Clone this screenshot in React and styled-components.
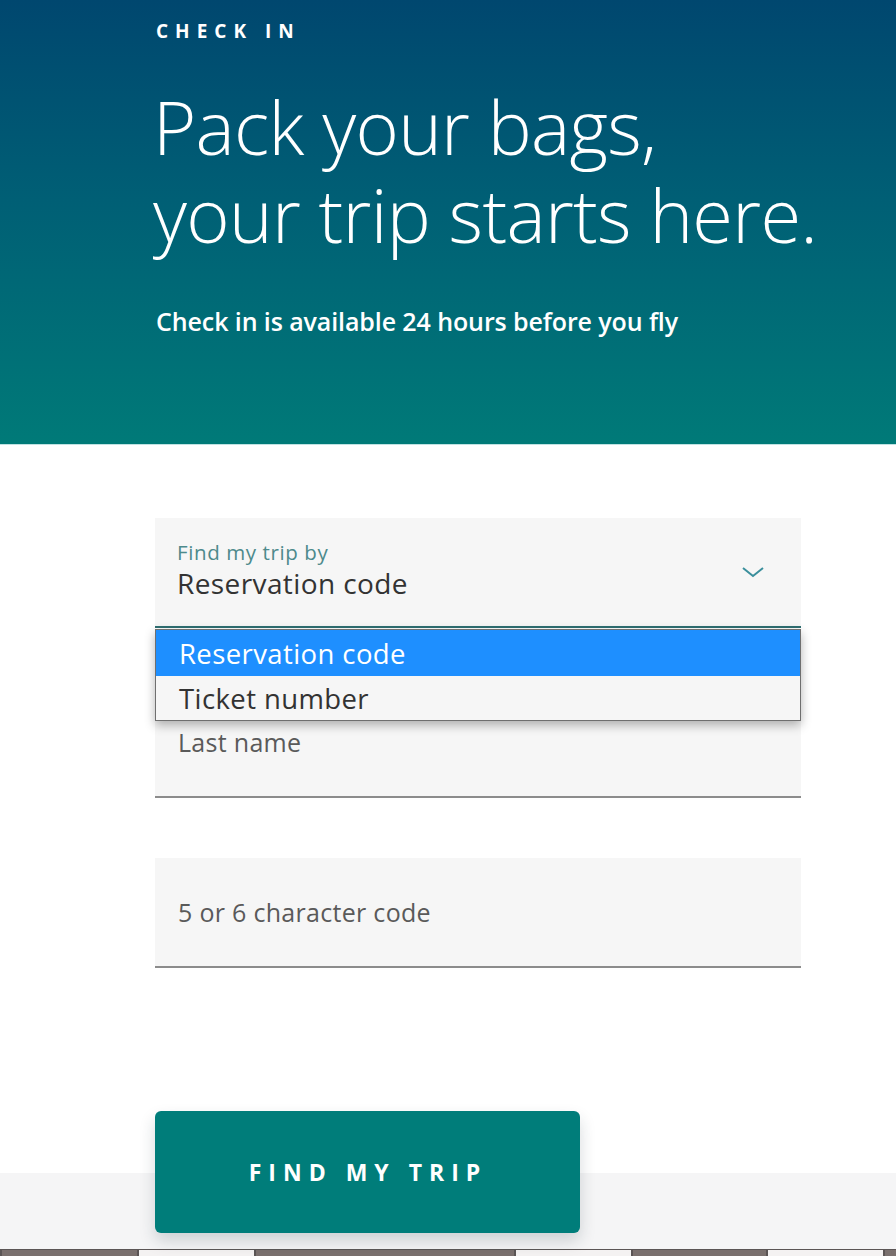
import React, { useState } from "react";
import styled, { createGlobalStyle } from "styled-components";

const GlobalStyle = createGlobalStyle`
  html, body {
    margin: 0;
    padding: 0;
    background: #ffffff;
  }
  * {
    box-sizing: border-box;
  }
`;

const options = ["Reservation code", "Ticket number"];
const tabs = [
    { w: 137, dark: true },
    { w: 117, dark: false },
    { w: 260, dark: true },
    { w: 117, dark: false },
    { w: 135, dark: true },
    { w: 117, dark: false },
    { w: 13, dark: true },
];

const App = () => {
    const [findBy, setFindBy] = useState(0);

    return (
        <Page>
            <GlobalStyle />
            <Hero>
                <Eyebrow>CHECK IN</Eyebrow>
                <Headline>
                    <HeadLine>Pack your bags,</HeadLine>
                    <HeadLine>your trip starts here.</HeadLine>
                </Headline>
                <Subline>Check in is available 24 hours before you fly</Subline>
            </Hero>
            <FormSection>
                <SelectWrap>
                    <SelectBox>
                        <SelectText>
                            <SelectLabel>Find my trip by</SelectLabel>
                            <SelectValue>{options[findBy]}</SelectValue>
                        </SelectText>
                        <svg width="24" height="14" viewBox="0 0 24 14" fill="none">
                            <path
                                d="M2 3 L12 11 L22 3"
                                stroke="#3a8f9c"
                                strokeWidth="2"
                            />
                        </svg>
                    </SelectBox>
                    <OptionList>
                        {options.map((opt, i) => (
                            <OptionItem
                                key={opt}
                                $active={i === findBy}
                                onClick={() => setFindBy(i)}
                            >
                                {opt}
                            </OptionItem>
                        ))}
                    </OptionList>
                </SelectWrap>
                <InputField placeholder="Last name" />
                <InputField placeholder="5 or 6 character code" />
                <FindButton>FIND MY TRIP</FindButton>
            </FormSection>
            <FooterBand />
            <TabStrip>
                {tabs.map((t, i) => (
                    <TabStub key={i} $w={t.w} $dark={t.dark} />
                ))}
            </TabStrip>
        </Page>
    );
};

const Page = styled.div`
    width: 896px;
    min-height: 1256px;
    display: flex;
    flex-direction: column;
    font-family: "Open Sans", "Noto Sans", sans-serif;
    overflow: hidden;
`;

const Hero = styled.div`
    height: 445px;
    padding: 19px 0 0 156px;
    background: linear-gradient(180deg, #00476f 0%, #005f75 45%, #007a78 100%);
    border-bottom: 1px solid #bfe2e2;
    color: #ffffff;
    display: flex;
    flex-direction: column;
`;

const Eyebrow = styled.div`
    font-size: 19px;
    font-weight: 700;
    letter-spacing: 7px;
    line-height: 24px;
`;

const Headline = styled.h1`
    margin: 44px 0 0 -3px;
    display: flex;
    flex-direction: column;
    gap: 8px;
    font-size: 74px;
    font-weight: 300;
    line-height: 80px;
    letter-spacing: -0.7px;
`;

const HeadLine = styled.span`
    display: block;
`;

const Subline = styled.div`
    margin-top: 50px;
    font-size: 25px;
    font-weight: 600;
    letter-spacing: -0.1px;
    line-height: 32px;
`;

const FormSection = styled.div`
    padding: 73px 0 0 155px;
    display: flex;
    flex-direction: column;
    gap: 60px;
    background: #ffffff;
`;

const SelectWrap = styled.div`
    position: relative;
    width: 646px;
`;

const SelectBox = styled.div`
    height: 110px;
    background: #f6f6f6;
    border-bottom: 2px solid #2f6f72;
    padding: 0 36px 0 22px;
    display: flex;
    align-items: center;
    justify-content: space-between;
`;

const SelectText = styled.div`
    display: flex;
    flex-direction: column;
    margin-top: -4px;
`;

const SelectLabel = styled.span`
    font-size: 20.5px;
    color: #4d8a8c;
    letter-spacing: 0.6px;
    line-height: 26px;
`;

const SelectValue = styled.span`
    font-size: 28px;
    color: #333333;
    letter-spacing: 0.4px;
    line-height: 36px;
`;

const OptionList = styled.ul`
    position: absolute;
    top: 111px;
    left: 0;
    right: 0;
    margin: 0;
    padding: 0;
    list-style: none;
    border: 1px solid #6f6f6f;
    background: #f6f6f6;
    box-shadow: 0 4px 10px rgba(0, 0, 0, 0.3);
    z-index: 2;
`;

const OptionItem = styled.li`
    height: ${(p) => (p.$active ? "46px" : "44px")};
    padding-left: 23px;
    display: flex;
    align-items: center;
    font-size: 27.5px;
    letter-spacing: 0.4px;
    background: ${(p) => (p.$active ? "#1e8fff" : "#f6f6f6")};
    color: ${(p) => (p.$active ? "#ffffff" : "#333333")};
    cursor: pointer;
`;

const InputField = styled.input`
    width: 646px;
    height: 110px;
    border: none;
    border-bottom: 2px solid #8c8c8c;
    background: #f6f6f6;
    padding: 0 23px;
    font-family: inherit;
    font-size: 25px;
    letter-spacing: 0.3px;
    color: #333333;
    outline: none;
    &::placeholder {
        color: #5a5a5a;
    }
`;

const FindButton = styled.button`
    position: relative;
    z-index: 1;
    margin: 83px 0 -60px 0;
    width: 425px;
    height: 122px;
    padding-left: 7px;
    border: none;
    border-radius: 6px;
    background: #007d7a;
    color: #ffffff;
    font-family: inherit;
    font-size: 23px;
    font-weight: 700;
    letter-spacing: 7px;
    box-shadow: 0 8px 16px rgba(30, 50, 60, 0.18);
    cursor: pointer;
`;

const FooterBand = styled.div`
    flex: 1;
    background: #f5f5f6;
`;

const TabStrip = styled.div`
    height: 7px;
    display: flex;
    border-top: 1px solid #5b5555;
`;

const TabStub = styled.div`
    width: ${(p) => p.$w}px;
    background: ${(p) => (p.$dark ? "#7a706e" : "#f4f2f2")};
    border-left: 2px solid #5b5555;
`;

export default App;
